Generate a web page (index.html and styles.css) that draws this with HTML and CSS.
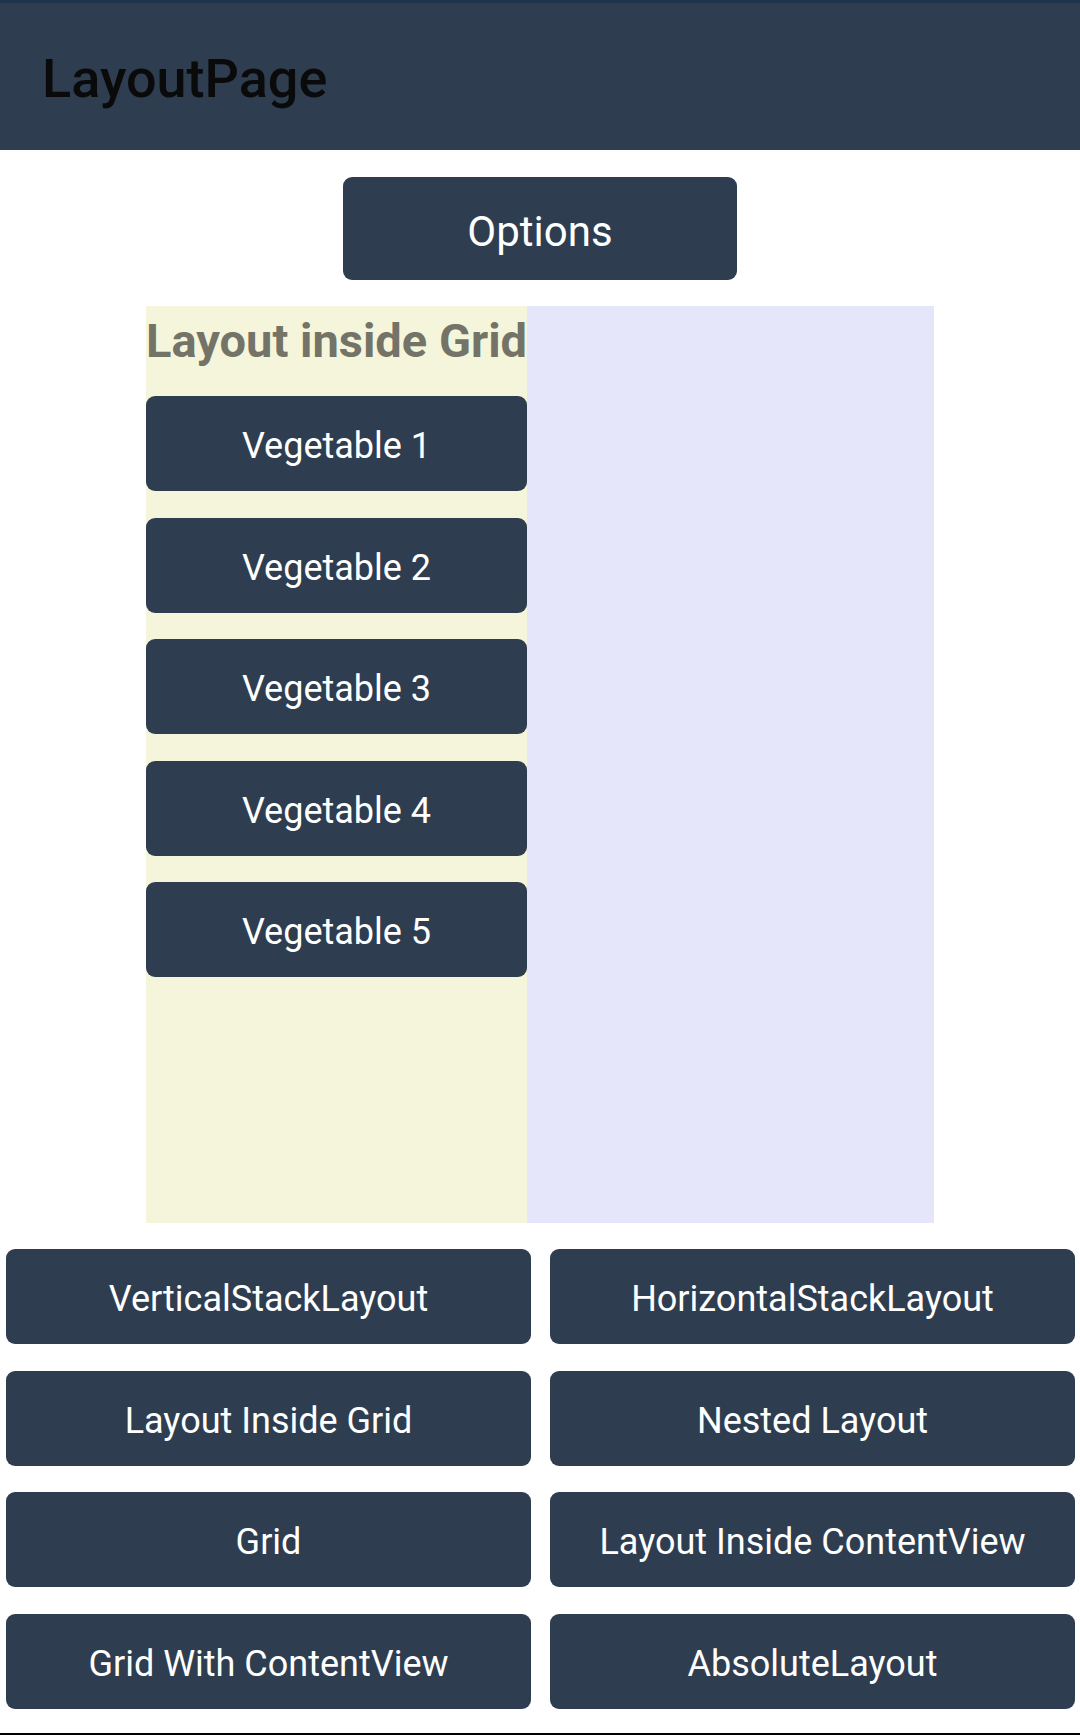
FILE: index.html
```html
<!DOCTYPE html>
<html lang="en">
<head>
<meta charset="utf-8">
<title>LayoutPage</title>
<link rel="stylesheet" href="styles.css">
</head>
<body>
<div class="page">
  <header class="app-bar">
    <h1 class="app-title">LayoutPage</h1>
  </header>
  <main class="content">
    <button class="btn btn-options">Options</button>
    <div class="demo-grid">
      <div class="col-left">
        <div class="col-title">Layout inside Grid</div>
        <button class="btn btn-veg">Vegetable 1</button>
        <button class="btn btn-veg">Vegetable 2</button>
        <button class="btn btn-veg">Vegetable 3</button>
        <button class="btn btn-veg">Vegetable 4</button>
        <button class="btn btn-veg">Vegetable 5</button>
      </div>
      <div class="col-right"></div>
    </div>
    <div class="nav-grid">
      <button class="btn btn-nav">VerticalStackLayout</button>
      <button class="btn btn-nav">HorizontalStackLayout</button>
      <button class="btn btn-nav">Layout Inside Grid</button>
      <button class="btn btn-nav">Nested Layout</button>
      <button class="btn btn-nav">Grid</button>
      <button class="btn btn-nav">Layout Inside ContentView</button>
      <button class="btn btn-nav">Grid With ContentView</button>
      <button class="btn btn-nav">AbsoluteLayout</button>
    </div>
  </main>
</div>
</body>
</html>
```
FILE: styles.css
```css
* {
  box-sizing: border-box;
}

html, body {
  margin: 0;
  padding: 0;
  background: #ffffff;
}

body {
  font-family: Roboto, "Noto Sans", "Liberation Sans", sans-serif;
}

.page {
  width: 1080px;
  height: 1735px;
  border-bottom: 2px solid #000000;
  display: flex;
  flex-direction: column;
  overflow: hidden;
}

.app-bar {
  height: 150px;
  flex: none;
  background: #2e3e50;
  border-top: 3px solid #1f344b;
  padding: 44px 0 0 42px;
}

.app-title {
  margin: 0;
  font-size: 54px;
  font-weight: 500;
  line-height: normal;
  color: #0a0a0a;
}

.content {
  display: flex;
  flex-direction: column;
  padding-top: 27px;
}

.btn {
  border: none;
  margin: 0;
  padding: 5px 0 0;
  background: #2e3e50;
  color: #ffffff;
  font-family: Roboto, "Noto Sans", "Liberation Sans", sans-serif;
  font-weight: 400;
  border-radius: 9px;
  display: flex;
  align-items: center;
  justify-content: center;
  white-space: nowrap;
}

.btn-options {
  width: 394px;
  height: 103px;
  align-self: center;
  font-size: 42px;
}

.demo-grid {
  margin: 26px auto 0;
  width: 788px;
  height: 917px;
  display: grid;
  grid-template-columns: 381px 407px;
}

.col-left {
  background: #f5f5dc;
  display: flex;
  flex-direction: column;
  gap: 26.5px;
}

.col-title {
  margin-top: 7px;
  margin-bottom: 1.5px;
  font-size: 47px;
  font-weight: 700;
  line-height: 55px;
  color: #737367;
  white-space: nowrap;
  overflow: hidden;
}

.btn-veg {
  height: 95px;
  width: 100%;
  font-size: 36px;
}

.col-right {
  background: #e6e6fa;
}

.nav-grid {
  margin: 26px 0 0 6px;
  width: 1069px;
  display: grid;
  grid-template-columns: 525px 525px;
  grid-auto-rows: 95px;
  column-gap: 19px;
  row-gap: 26.5px;
}

.btn-nav {
  font-size: 36px;
}
```
